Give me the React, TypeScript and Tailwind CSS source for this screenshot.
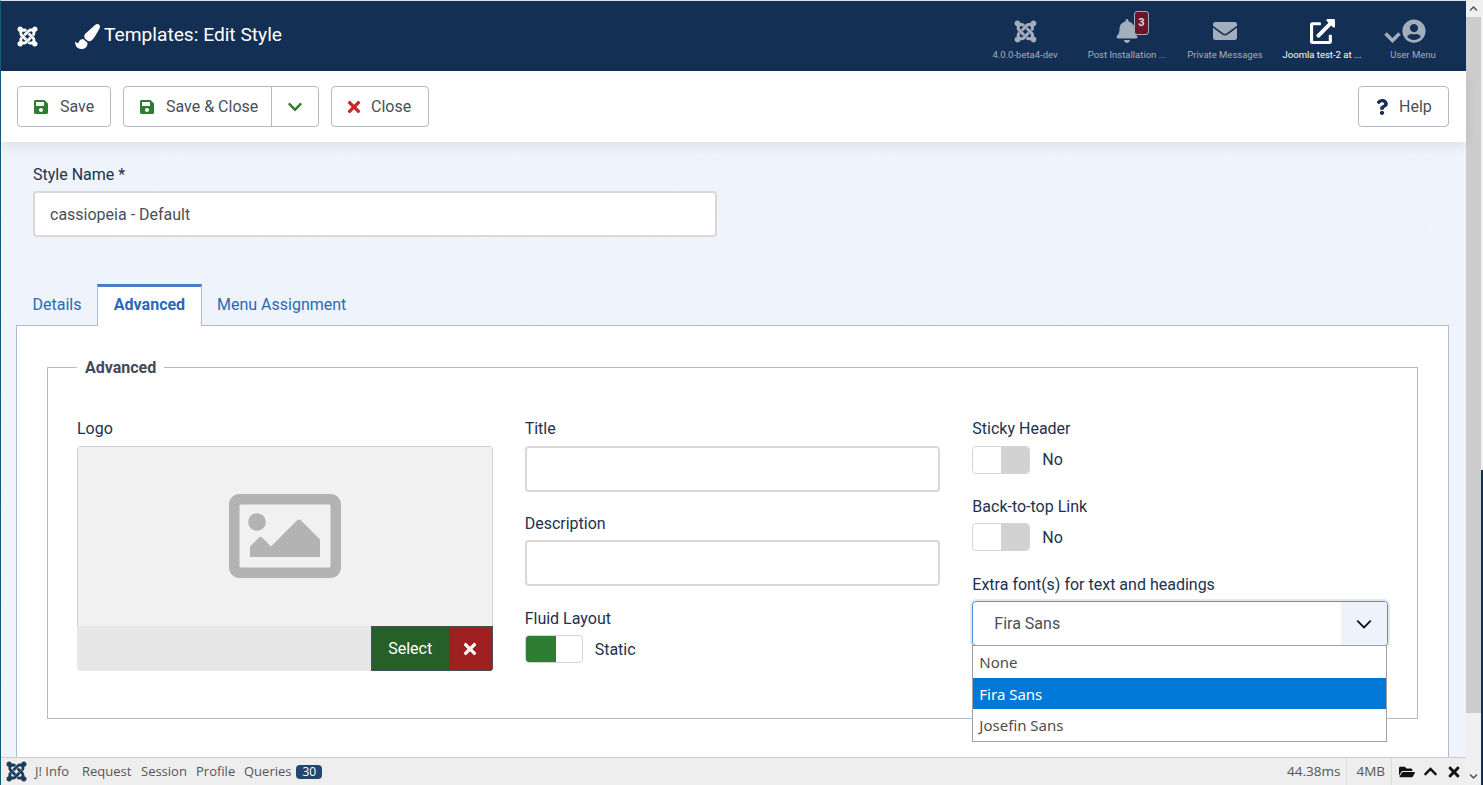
import React from "react";
import {
  FaBell,
  FaChevronDown,
  FaChevronUp,
  FaEnvelope,
  FaExternalLinkAlt,
  FaFolderOpen,
  FaJoomla,
  FaPaintBrush,
  FaQuestion,
  FaRegImage,
  FaSave,
  FaTimes,
  FaUserCircle,
} from "react-icons/fa";

function HeaderItem({
  label,
  icon,
  active,
  className,
}: {
  label: string;
  icon: React.ReactNode;
  active?: boolean;
  className?: string;
}) {
  return (
    <div className={"flex flex-col items-center " + (active ? "text-white " : "text-[#a3aebd] ") + (className || "")}>
      <div className="flex h-[32px] items-center justify-center">{icon}</div>
      <div className="mt-[2px] text-[9.5px] leading-[12px] whitespace-nowrap">{label}</div>
    </div>
  );
}

function ToolButton({ icon, label, className }: { icon: React.ReactNode; label: string; className?: string }) {
  return (
    <button className={"flex h-[41px] items-center rounded-[4px] border border-[#b2bac6] bg-white text-[#495057] " + (className || "")}>
      {icon}
      <span>{label}</span>
    </button>
  );
}

function TextField({ value }: { value?: string }) {
  return (
    <div className="flex h-[46px] items-center rounded-[4px] border-2 border-[#d8d8d8] bg-white px-[15px] pt-[2px] text-[#495057]">
      {value}
    </div>
  );
}

function Switcher({ on, label, low }: { on?: boolean; label: string; low?: boolean }) {
  return (
    <div className="flex items-center gap-[12px]">
      <div className="flex h-[28px] w-[58px] overflow-hidden rounded-[4px] border border-[#d4d4d4] bg-white">
        {on ? <div className="w-[30px] bg-[#2f7d32]" /> : <div className="w-[28px]" />}
        {!on && <div className="flex-1 bg-[#d2d2d2]" />}
      </div>
      <span className={"text-[#22314d] " + (low ? "pt-[2px]" : "")}>{label}</span>
    </div>
  );
}

function Label({ children, tight }: { children: React.ReactNode; tight?: boolean }) {
  return (
    <div className={"h-[18px] leading-[18px] text-[#22314d] " + (tight ? "mb-[7px]" : "mb-[8px]")}>{children}</div>
  );
}

export default function App() {
  return (
    <div className="flex h-[785px] w-[1483px] overflow-hidden bg-white font-['Roboto',sans-serif] text-[16px]">
      <div className="flex min-w-0 flex-1 flex-col border-t border-l border-t-[#dfe3e8] border-l-[#125a7a]">
        <header className="flex h-[70px] shrink-0 items-center bg-[#132f53] text-white">
          <FaJoomla className="ml-[15px] text-[23px]" />
          <FaPaintBrush className="ml-[36px] text-[25px]" />
          <div className="mb-[1px] ml-[4px] text-[19.2px]">Templates: Edit Style</div>
          <div className="mr-[4px] ml-auto flex items-start pt-[4px]">
            <HeaderItem className="w-[118px]" label="4.0.0-beta4-dev" icon={<FaJoomla className="text-[25px]" />} />
            <div className="relative w-[86px]">
              <HeaderItem label="Post Installation ..." icon={<FaBell className="text-[24px]" />} />
              <span className="absolute -top-[4px] left-[50px] flex h-[24px] w-[15px] items-center justify-center rounded-[3px] border border-[#a3aebd] bg-[#6f1426] text-[11px] font-bold text-[#d8dce2]">
                3
              </span>
            </div>
            <HeaderItem className="w-[110px]" label="Private Messages" icon={<FaEnvelope className="text-[24px]" />} />
            <HeaderItem
              active
              className="w-[84px]"
              label="Joomla test-2 at ..."
              icon={<FaExternalLinkAlt className="text-[25px]" />}
            />
            <HeaderItem
              className="w-[98px]"
              label="User Menu"
              icon={
                <span className="mr-[17px] flex items-center">
                  <svg className="mt-[12px] mr-[1px] h-[12px] w-[17px]" viewBox="0 0 17 12" fill="none" stroke="currentColor" strokeWidth="3.6">
                    <path d="M1.5 2.5l7 7 7-7" />
                  </svg>
                  <FaUserCircle className="text-[24px]" />
                </span>
              }
            />
          </div>
        </header>

        <div className="z-10 flex h-[71px] shrink-0 items-center gap-[12px] bg-white pr-[17px] pl-[16px] shadow-[0_4px_12px_rgba(0,0,0,0.08)]">
          <ToolButton
            className="w-[94px] pl-[15px]"
            icon={<FaSave className="mr-[11px] text-[16px] text-[#2f7d32]" />}
            label="Save"
          />
          <div className="flex h-[41px] w-[196px] items-center rounded-[4px] border border-[#b2bac6] bg-white text-[#495057]">
            <div className="flex h-full w-[148px] items-center border-r border-[#b2bac6] pl-[15px]">
              <FaSave className="mr-[11px] text-[16px] text-[#2f7d32]" />
              <span>Save &amp; Close</span>
            </div>
            <div className="flex flex-1 justify-center">
              <FaChevronDown className="text-[16px] text-[#2f7d32]" />
            </div>
          </div>
          <ToolButton
            className="w-[98px] pl-[13px]"
            icon={<FaTimes className="mr-[8px] text-[18px] text-[#c52827]" />}
            label="Close"
          />
          <ToolButton
            className="ml-auto w-[91px] pl-[15px]"
            icon={<FaQuestion className="mr-[9px] text-[16px] text-[#132f53]" />}
            label="Help"
          />
        </div>

        <main className="relative min-h-0 flex-1 overflow-hidden bg-[#eff3fb]">
          <svg className="absolute inset-0 h-full w-full">
            <defs>
              <pattern id="bgtile" x="899" y="48" width="178" height="178" patternUnits="userSpaceOnUse">
                <g fill="none" stroke="#f2f5fc" strokeWidth="1">
                  <path d="M60 60C50 40 60 18 80 18C95 18 102 30 118 50C134 30 141 18 156 18C176 18 178 40 174 58L152 90L172 122C176 128 176 134 172 140L148 178" />
                  <path d="M72 58C66 40 72 32 82 32C92 32 104 50 118 66C132 50 144 32 154 32C164 32 168 44 160 60L138 90L160 126L136 178" />
                  <circle cx="11" cy="98" r="40" />
                </g>
              </pattern>
            </defs>
            <rect width="100%" height="100%" fill="url(#bgtile)" />
          </svg>
          <div className="relative px-[15px] pt-[24px]">
            <div className="pl-[17px]">
              <Label>Style Name *</Label>
              <div className="-mt-[1px] w-[684px]">
                <TextField value="cassiopeia - Default" />
              </div>
            </div>

            <div className="mt-[47px] flex h-[41px] items-stretch pl-[1px] text-[#2a69b8]">
              <div className="flex w-[80px] items-center justify-center pt-[1px]">Details</div>
              <div className="relative z-10 -mb-px flex w-[105px] items-center justify-center border-x border-t-[3px] border-x-[#afbccd] border-t-[#4a7dc4] bg-white pb-[4px] font-bold">
                Advanced
              </div>
              <div className="flex items-center pt-[1px] pl-[15px]">Menu Assignment</div>
            </div>

            <div className="h-[460px] w-[1433px] border border-[#afbccd] bg-white px-[30px] pt-[41px]">
              <div className="relative h-[352px] border border-[#afbccd] px-[29px] pt-[52px]">
                <div className="absolute -top-[9px] left-[29px] bg-white px-[8px] leading-[18px] font-bold text-[#3f4a5a]">
                  Advanced
                </div>
                <div className="grid grid-cols-3 gap-x-[32px]">
                  <div>
                    <Label>Logo</Label>
                    <div className="flex h-[225px] flex-col overflow-hidden rounded-[4px] bg-[#f1f1f1]">
                      <div className="flex flex-1 items-center justify-center border-x border-t border-[#d0d0d0]">
                        <FaRegImage className="mb-[2px] text-[112px] text-[#b3b3b3]" />
                      </div>
                      <div className="flex h-[45px] justify-end bg-[#e7e7e7]">
                        <div className="flex w-[78px] items-center justify-center border-y border-l border-[#495057] bg-[#265f27] text-white">
                          Select
                        </div>
                        <div className="flex w-[44px] items-center justify-center border-y border-r border-[#495057] bg-[#a01f20] text-white">
                          <FaTimes className="text-[18px]" />
                        </div>
                      </div>
                    </div>
                  </div>

                  <div>
                    <Label>Title</Label>
                    <TextField />
                    <div className="mt-[23px]">
                      <Label tight>Description</Label>
                      <TextField />
                    </div>
                    <div className="mt-[24px]">
                      <Label tight>Fluid Layout</Label>
                      <Switcher on low label="Static" />
                    </div>
                  </div>

                  <div className="relative">
                    <Label>Sticky Header</Label>
                    <Switcher label="No" />
                    <div className="mt-[24px]">
                      <Label tight>Back-to-top Link</Label>
                      <Switcher low label="No" />
                    </div>
                    <div className="mt-[25px]">
                      <Label tight>Extra font(s) for text and headings</Label>
                      <div className="flex h-[45px] items-center overflow-hidden rounded-[4px] border border-[#4a90e2] bg-white pl-[21px] text-[#495057] shadow-[0_0_0_2px_#e8e8e8]">
                        <span>Fira Sans</span>
                        <div className="ml-auto flex h-full w-[46px] items-center justify-center bg-[#eef3fb]">
                          <svg className="h-[18px] w-[18px]" viewBox="0 0 16 16" fill="none" stroke="#111111" strokeWidth="1.6">
                            <path d="M2 5l6 6 6-6" />
                          </svg>
                        </div>
                      </div>
                    </div>
                    <div className="absolute top-[225px] right-[1px] left-0 z-20 border border-[#a0a0a0] bg-white font-['Noto_Sans',sans-serif] text-[15px] leading-[32px] text-[#4d4d4d]">
                      <div className="h-[32px] pl-[6px]">None</div>
                      <div className="h-[31px] bg-[#0078d7] pt-[1px] pl-[6px] leading-[31px] text-white">Fira Sans</div>
                      <div className="h-[32px] pt-[1px] pl-[6px] leading-[31px]">Josefin Sans</div>
                    </div>
                  </div>
                </div>
              </div>
            </div>
          </div>
        </main>

        <footer className="z-30 flex h-[28px] shrink-0 items-center border-t border-[#cccccc] bg-[#eeeeee] font-['Open_Sans',sans-serif] text-[13px] text-[#555]">
          <FaJoomla className="ml-[4px] text-[23px] text-[#1c3d5a]" />
          <div className="ml-[7px] flex items-center">
            <span className="w-[47px]">J! Info</span>
            <span className="w-[59px]">Request</span>
            <span className="w-[55px]">Session</span>
            <span className="w-[48px]">Profile</span>
            <span className="flex items-center gap-[5px]">
              Queries
              <span className="rounded-[4px] bg-[#24466e] px-[6px] text-[12px] leading-[14px] text-white">30</span>
            </span>
          </div>
          <div className="ml-auto flex h-full items-center text-[13.5px]">
            <span className="border-r border-[#dddddd] pr-[6px] leading-[27px]">44.38ms</span>
            <span className="border-r border-[#dddddd] pr-[6px] pl-[9px] leading-[27px]">4MB</span>
            <span className="flex items-center gap-[8px] pr-[4px] pl-[7px] text-[#111]">
              <FaFolderOpen className="text-[16px]" />
              <FaChevronUp className="text-[15px]" />
              <FaTimes className="text-[16px]" />
            </span>
          </div>
        </footer>
      </div>

      <div className="flex w-[15px] shrink-0 flex-col bg-[#f0f0f0]">
        <div className="flex h-[17px] items-center justify-center">
          <FaChevronUp className="text-[9px] text-[#505050]" />
        </div>
        <div className="h-[696px] bg-[#cdcdcd]" />
        <div className="mt-auto flex h-[17px] items-center justify-center">
          <FaChevronDown className="text-[9px] text-[#505050]" />
        </div>
      </div>
      <div className="flex w-[2px] shrink-0 flex-col bg-[#132f53]">
        <div className="h-[470px] bg-[#f0f0f0]" />
      </div>
    </div>
  );
}
